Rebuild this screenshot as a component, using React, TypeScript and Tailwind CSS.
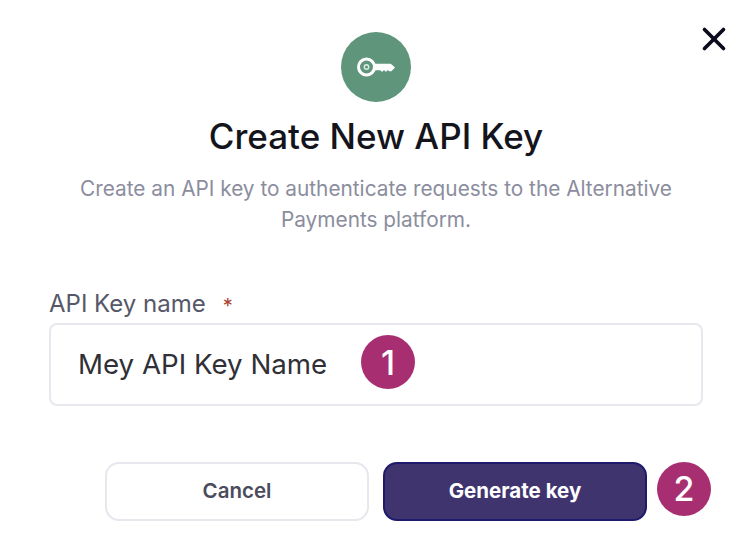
import { X } from "lucide-react";

function KeyIcon() {
  return (
    <svg width="40" height="22" viewBox="0 0 40 22" fill="none" stroke="white" strokeLinejoin="round" strokeLinecap="round">
      <circle cx="10.5" cy="11" r="8" strokeWidth="3" />
      <circle cx="10.5" cy="11" r="2.2" strokeWidth="1.4" stroke="#dcebe3" />
      <path d="M19 8.5H34.5L38 11.5L35 14.5H33.5L31.8 13L30 14.8L28 13L26.2 14.8L24.5 13.5H19Z" fill="white" strokeWidth="1.6" />
    </svg>
  );
}

function Badge({ children }: { children: React.ReactNode }) {
  return (
    <div className="flex h-[54px] w-[54px] items-center justify-center rounded-full bg-[#a82e72] text-[34px] font-medium text-white">
      {children}
    </div>
  );
}

export default function App() {
  return (
    <div className="relative h-[546px] w-[752px] overflow-hidden bg-white pt-8 font-['Inter',sans-serif]">
      <button className="absolute right-[19px] top-[20px] text-[#0b0b1e]">
        <X size={38} strokeWidth={2.3} />
      </button>

      <div className="flex flex-col items-center">
        <div className="flex h-[70px] w-[70px] items-center justify-center rounded-full bg-[#5f967b]">
          <KeyIcon />
        </div>
        <h1 className="mt-[14px] text-[35px] leading-10 font-medium text-[#14141c]">Create New API Key</h1>
        <p className="mt-[17px] w-[610px] text-center text-[20.8px] leading-[31px] text-[#8b8d9e]">
          Create an API key to authenticate requests to the Alternative Payments platform.
        </p>
      </div>

      <div className="mt-[55px] px-[49px]">
        <label className="flex h-7 items-center text-[24px] leading-7 text-[#565869]">
          API Key name <span className="ml-[17px] mt-[3px] text-[20px] leading-none text-[#a8402f]">*</span>
        </label>
        <div className="relative mt-[5px] flex h-[83px] items-center rounded-[8px] border-2 border-[#e7e7ee] pl-[27px] text-[27.7px] text-[#303036]">
          Mey API Key Name
          <div className="absolute left-[310px] top-[10px]">
            <Badge>1</Badge>
          </div>
        </div>
      </div>

      <div className="mt-[56px] flex items-center pl-[105px]">
        <button className="h-[59px] w-[264px] rounded-[14px] border-2 border-[#e7e7ee] bg-white text-[20.5px] font-semibold text-[#4a4b5c]">
          Cancel
        </button>
        <button className="ml-[14px] h-[59px] w-[264px] rounded-[14px] border-2 border-[#1f1a6b] bg-[#40346f] text-[20.5px] font-bold text-white">
          Generate key
        </button>
        <div className="ml-[10px] -mt-[6px]">
          <Badge>2</Badge>
        </div>
      </div>
    </div>
  );
}
